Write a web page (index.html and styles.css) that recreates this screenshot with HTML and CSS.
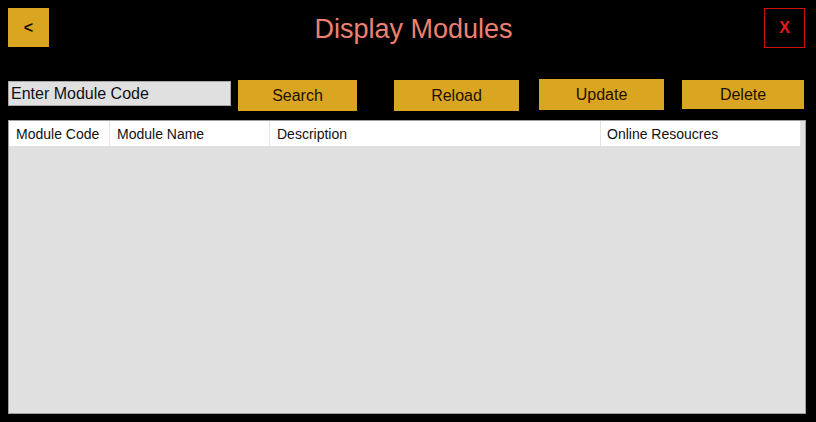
FILE: index.html
```html
<!DOCTYPE html>
<html lang="en">
<head>
    <meta charset="UTF-8">
    <meta name="viewport" content="width=device-width, initial-scale=1.0">
    <title>Display Modules</title>
    <link rel="stylesheet" href="styles.css">
</head>
<body>
    <header class="topbar">
        <button class="back-btn">&lt;</button>
        <h1 class="title">Display Modules</h1>
        <button class="close-btn">X</button>
    </header>

    <div class="toolbar">
        <input type="text" class="code-input" value="Enter Module Code">
        <button class="action-btn search-btn">Search</button>
        <button class="action-btn reload-btn">Reload</button>
        <button class="action-btn update-btn">Update</button>
        <button class="action-btn delete-btn">Delete</button>
    </div>

    <div class="grid">
        <div class="grid-head">
            <div class="col col-code">Module Code</div>
            <div class="col col-name">Module Name</div>
            <div class="col col-desc">Description</div>
            <div class="col col-res">Online Resoucres</div>
        </div>
        <div class="grid-body"></div>
    </div>
</body>
</html>
```

FILE: styles.css
```css
body {
    font-family: 'Liberation Sans', Arial, sans-serif;
    background-color: #000;
    margin: 0;
    padding: 0;
    width: 816px;
    height: 422px;
    overflow: hidden;
}
button {
    font-family: inherit;
    border: none;
    padding: 0;
    cursor: pointer;
}
.topbar {
    display: flex;
    align-items: center;
    height: 39px;
    padding: 8px 11px 0 8px;
}
.back-btn {
    width: 41px;
    height: 39px;
    background-color: #daa520;
    color: #1a1000;
    font-size: 16px;
    font-weight: bold;
}
.title {
    flex: 1;
    margin: 4px 0 0 0;
    padding-left: 14px;
    text-align: center;
    font-size: 27px;
    font-weight: normal;
    color: #ef8070;
}
.close-btn {
    width: 41px;
    height: 40px;
    background-color: #000;
    border: 1px solid #c81414;
    color: #e81818;
    font-size: 16px;
    font-weight: bold;
}
.toolbar {
    display: flex;
    align-items: flex-start;
    height: 32px;
    margin-top: 32px;
    padding-left: 8px;
}
.code-input {
    box-sizing: border-box;
    width: 223px;
    height: 25px;
    margin-top: 2px;
    padding: 0 2px;
    border: 1px solid #a8a8a8;
    background-color: #e0e0e0;
    font-family: inherit;
    font-size: 16px;
    color: #111;
}
.action-btn {
    height: 31px;
    background-color: #daa520;
    color: #1e1200;
    font-size: 16px;
}
.search-btn {
    width: 119px;
    margin: 1px 0 0 7px;
}
.reload-btn {
    width: 125px;
    margin: 1px 0 0 37px;
}
.update-btn {
    width: 125px;
    margin: 0 0 0 20px;
}
.delete-btn {
    width: 122px;
    height: 29px;
    margin: 1px 0 0 18px;
}
.grid {
    box-sizing: border-box;
    width: 798px;
    height: 294px;
    margin: 9px 0 0 8px;
    border: 1px solid #a0a0a0;
    background-color: #e0e0e0;
    display: flex;
    flex-direction: column;
}
.grid-head {
    display: flex;
    height: 25px;
    background-color: #fff;
    margin-right: 4px;
    border-right: 1px solid #e4e4e4;
}
.col {
    box-sizing: border-box;
    height: 25px;
    line-height: 26px;
    padding-left: 7px;
    font-size: 14px;
    color: #111;
    border-right: 1px solid #e4e4e4;
}
.col-code {
    width: 101px;
}
.col-name {
    width: 160px;
}
.col-desc {
    width: 331px;
}
.col-res {
    flex: 1;
    border-right: none;
    padding-left: 6px;
}
.grid-body {
    flex: 1;
}
```
